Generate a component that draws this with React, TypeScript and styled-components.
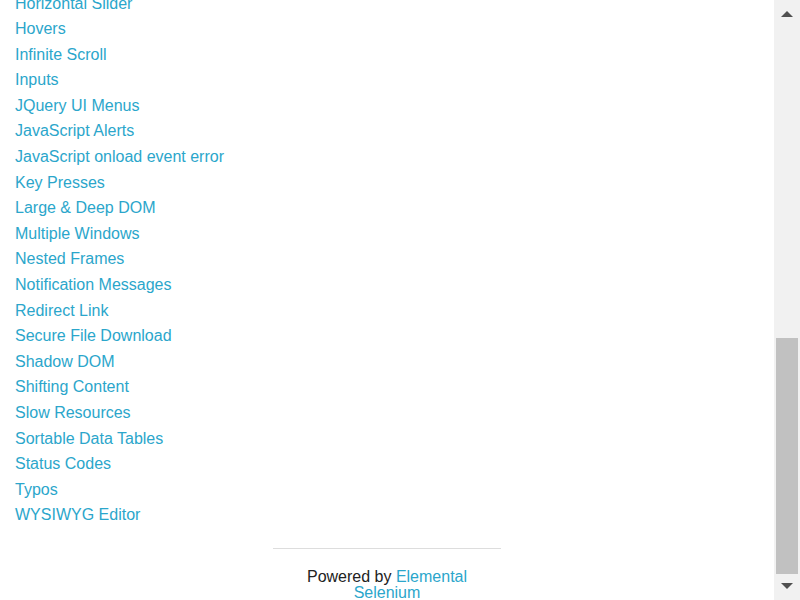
import React from "react";
import styled, { createGlobalStyle } from "styled-components";

const GlobalStyle = createGlobalStyle`
  html, body {
    margin: 0;
    padding: 0;
    background: #ffffff;
    overflow: hidden;
  }
  body {
    font-family: "Liberation Sans", Arial, Helvetica, sans-serif;
    color: #222222;
  }
`;

const Window = styled.div`
  display: flex;
  width: 800px;
  height: 600px;
  overflow: hidden;
`;

const Viewport = styled.div`
  flex: 1;
  height: 600px;
  overflow: hidden;
  background: #ffffff;
`;

const Content = styled.div<{ $offset: number }>`
  margin-top: ${(p) => p.$offset}px;
`;

const ExampleList = styled.ul`
  list-style: none;
  margin: 0;
  padding: 0 0 0 15px;
`;

const Item = styled.li`
  font-size: 16px;
  line-height: 25.6px;
  height: 25.6px;
  white-space: nowrap;
`;

const Link = styled.a`
  color: #2ba6cb;
  text-decoration: none;
`;

const Footer = styled.div`
  width: 228px;
  margin: 0 auto;
`;

const Rule = styled.hr`
  border: 0;
  border-top: 1px solid #dddddd;
  height: 0;
  margin: 20px 0 20px;
`;

const Credit = styled.div`
  text-align: center;
  font-size: 16px;
  line-height: 16px;
  color: #222222;
`;

const Scrollbar = styled.div`
  width: 26px;
  height: 600px;
  background: #f1f1f1;
  display: flex;
  flex-direction: column;
`;

const ArrowButton = styled.div`
  height: 26px;
  display: flex;
  align-items: center;
  justify-content: center;
  flex: none;
`;

const Triangle = styled.div<{ $dir: "up" | "down" }>`
  width: 0;
  height: 0;
  border-left: 6px solid transparent;
  border-right: 6px solid transparent;
  ${(p) =>
    p.$dir === "up"
      ? "border-bottom: 6px solid #505050; margin-top: 2px;"
      : "border-top: 6px solid #505050; margin-top: -2px;"}
`;

const Track = styled.div`
  flex: 1;
  display: flex;
  flex-direction: column;
  padding: 0 2px;
`;

const Thumb = styled.div`
  margin-top: auto;
  height: 236px;
  background: #c1c1c1;
`;

const examples = [
  "Horizontal Slider",
  "Hovers",
  "Infinite Scroll",
  "Inputs",
  "JQuery UI Menus",
  "JavaScript Alerts",
  "JavaScript onload event error",
  "Key Presses",
  "Large & Deep DOM",
  "Multiple Windows",
  "Nested Frames",
  "Notification Messages",
  "Redirect Link",
  "Secure File Download",
  "Shadow DOM",
  "Shifting Content",
  "Slow Resources",
  "Sortable Data Tables",
  "Status Codes",
  "Typos",
  "WYSIWYG Editor",
];

export default function App() {
  return (
    <>
      <GlobalStyle />
      <Window>
        <Viewport>
          <Content $offset={-9.5}>
            <ExampleList>
              {examples.map((name) => (
                <Item key={name}>
                  <Link href="#">{name}</Link>
                </Item>
              ))}
            </ExampleList>
            <Footer>
              <Rule />
              <Credit>
                Powered by <Link href="#">Elemental Selenium</Link>
              </Credit>
            </Footer>
          </Content>
        </Viewport>
        <Scrollbar>
          <ArrowButton>
            <Triangle $dir="up" />
          </ArrowButton>
          <Track>
            <Thumb />
          </Track>
          <ArrowButton>
            <Triangle $dir="down" />
          </ArrowButton>
        </Scrollbar>
      </Window>
    </>
  );
}
